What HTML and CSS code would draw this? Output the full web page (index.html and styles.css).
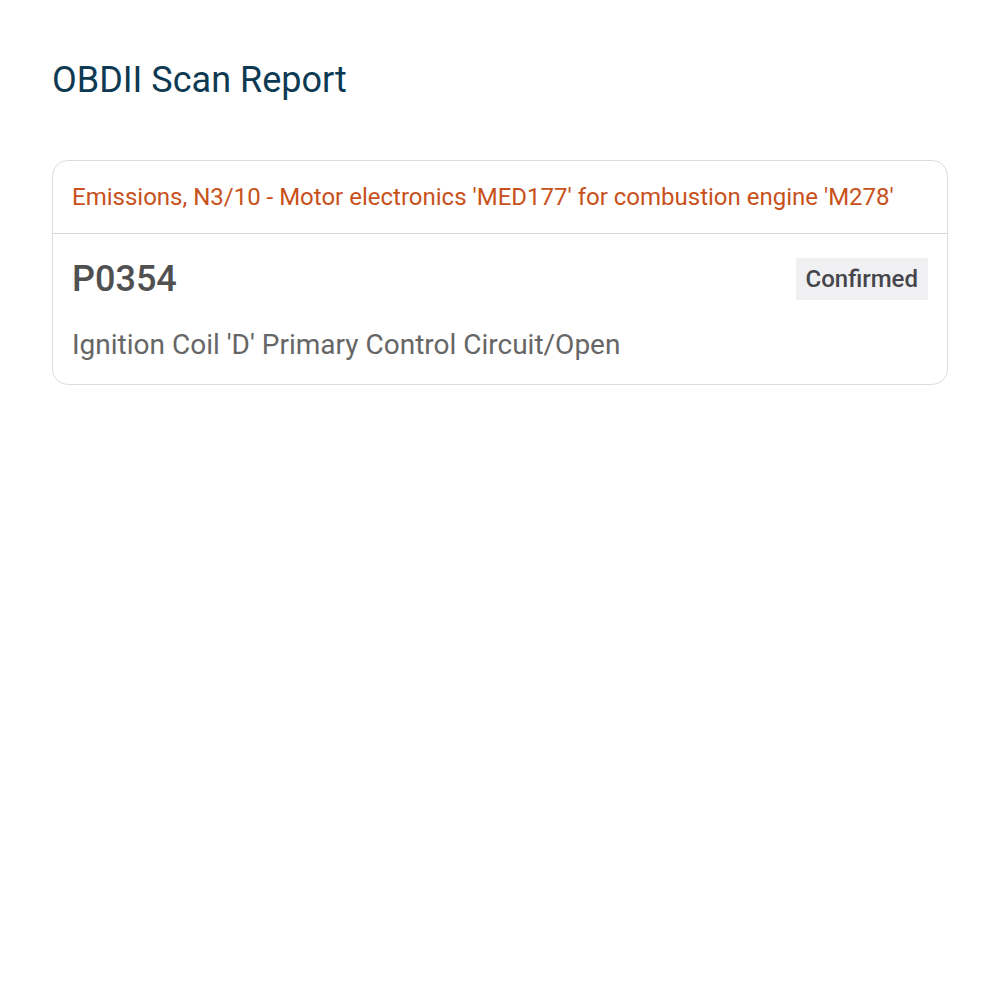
FILE: index.html
```html
<!DOCTYPE html>
<html lang="en">
<head>
    <meta charset="UTF-8">
    <meta name="viewport" content="width=device-width, initial-scale=1.0">
    <title>OBDII Scan Report</title>
    <link rel="stylesheet" href="styles.css">
</head>
<body>
    <div class="container">
        <h1 class="title">OBDII Scan Report</h1>

        <div class="card">
            <div class="card-header">
                Emissions, N3/10 - Motor electronics 'MED177' for combustion engine 'M278'
            </div>
            <div class="card-body">
                <div class="code-row">
                    <span class="code">P0354</span>
                    <span class="badge">Confirmed</span>
                </div>
                <p class="description">Ignition Coil 'D' Primary Control Circuit/Open</p>
            </div>
        </div>
    </div>
</body>
</html>
```

FILE: styles.css
```css
body {
    font-family: Roboto, "Noto Sans", sans-serif;
    background-color: #ffffff;
    margin: 0;
    padding: 0;
}
.container {
    padding: 52px 52px;
}
.title {
    margin: 4px 0 56px;
    font-size: 36px;
    font-weight: 400;
    line-height: 48px;
    color: #0d3a52;
}
.card {
    border: 1px solid #dcdcdc;
    border-radius: 16px;
    overflow: hidden;
}
.card-header {
    padding: 22px 19px 22px;
    font-size: 24px;
    line-height: 28px;
    color: #c8511b;
    border-bottom: 1px solid #d8d8d8;
}
.card-body {
    padding: 24px 19px 22px;
}
.code-row {
    display: flex;
    justify-content: space-between;
    align-items: center;
}
.code {
    font-size: 36px;
    font-weight: 500;
    color: #505050;
}
.badge {
    background-color: #f0f0f2;
    padding: 6px 10px;
    font-size: 24px;
    font-weight: 500;
    line-height: 30px;
    color: #45454b;
}
.description {
    margin: 28px 0 0;
    font-size: 28px;
    line-height: 34px;
    color: #666666;
}
```
